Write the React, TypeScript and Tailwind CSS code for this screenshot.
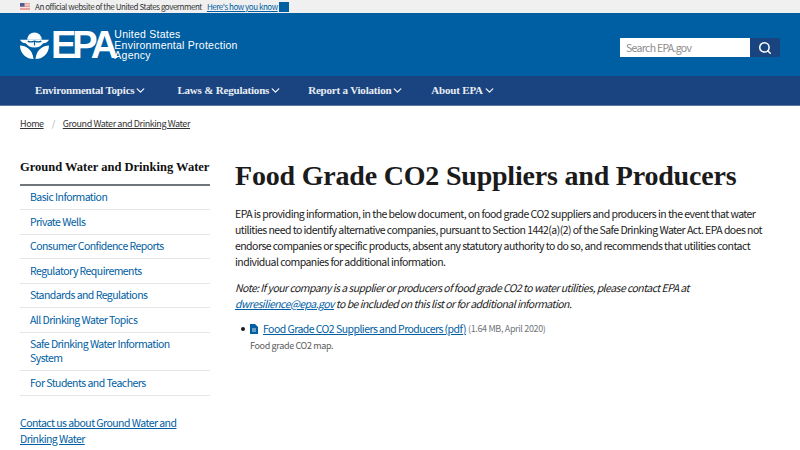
import { ChevronDown, Search } from "lucide-react";

const sans = "font-['Noto_Sans_CJK_SC','Noto_Sans',sans-serif]";
const serif = "font-['Liberation_Serif','DejaVu_Serif',serif]";

const side = [
  "Basic Information",
  "Private Wells",
  "Consumer Confidence Reports",
  "Regulatory Requirements",
  "Standards and Regulations",
  "All Drinking Water Topics",
  "Safe Drinking Water Information System",
  "For Students and Teachers",
];
const nav = [
  { t: "Environmental Topics", w: "mr-[30px]" },
  { t: "Laws & Regulations", w: "mr-[26px]" },
  { t: "Report a Violation", w: "mr-[27px]" },
  { t: "About EPA", w: "" },
];

function Emblem() {
  return (
    <svg width="29" height="29" viewBox="0 0 30 30" className="shrink-0">
      <path d="M7.5 10 A7.5 7.5 0 0 1 22.5 10Z" fill="#fff" />
      <path d="M0 10 H30 C29 12 27 13.4 24 13.6 C22 16.5 19 18 15 18 C11 18 8 16.5 6 13.6 C3 13.4 1 12 0 10Z" fill="#fff" />
      <path d="M8 11.5 C10.5 13 12.5 12.5 15 11.5 C17.5 12.5 19.5 13 22 11.5" fill="none" stroke="#005ea2" strokeWidth="1.3" />
      <path d="M15 16 V12" stroke="#005ea2" strokeWidth="1.2" />
      <path d="M0 16 C6 16 13 20 14 30 C7 30 0 25 0 16Z" fill="#fff" />
      <path d="M30 16 C24 16 17 20 16 30 C23 30 30 25 30 16Z" fill="#fff" />
    </svg>
  );
}

export default function App() {
  return (
    <div className={`h-[450px] w-[800px] overflow-hidden bg-white ${sans} text-[#1b1b1b]`}>
      <div className="flex h-[13px] items-center bg-[#f0f0f0] pl-[20px] text-[8px] leading-none tracking-[-0.45px]">
        <svg width="10" height="7" viewBox="0 0 10 7" className="mr-[5px]">
          <rect width="10" height="7" fill="#e8a49c" />
          <rect y="1.4" width="10" height="1" fill="#f6e4e0" />
          <rect y="4" width="10" height="1" fill="#f6e4e0" />
          <rect width="4.5" height="3.6" fill="#4a5f96" />
        </svg>
        <span className="text-[#333]">An official website of the United States government</span>
        <span className="ml-[5px] text-[#005ea2] underline">Here's how you know</span>
        <span className="ml-[1px] h-[10px] w-[10px] bg-[#005ea2]" />
      </div>

      <header className="flex h-[63px] items-center justify-between bg-[#005ea2] pl-[20px] pr-[20px]">
        <div className="flex items-center text-white">
          <Emblem />
          <span className="ml-[2px] font-['Liberation_Sans_Narrow','Liberation_Sans',sans-serif] text-[38px] font-bold leading-none tracking-[-4px]">EPA</span>
          <div className="pt-[1px] font-['Liberation_Sans',sans-serif] text-[10.5px] leading-[10.5px] tracking-[0.25px]">
            <div>United States</div>
            <div>Environmental Protection</div>
            <div>Agency</div>
          </div>
        </div>
        <div className="mt-[6px] flex h-[19px]">
          <div className="flex w-[130px] items-center bg-white pl-[6px] text-[10.5px] tracking-[-0.7px] text-[#8b8b8b]">Search EPA.gov</div>
          <div className="flex w-[30px] items-center justify-center rounded-r-[2px] bg-[#1a4480]">
            <Search size={14} color="#fff" strokeWidth={2.6} />
          </div>
        </div>
      </header>

      <nav className={`flex h-[30px] items-center border-b border-[#5b7aa8] bg-[#1a4480] pl-[35px] ${serif} text-[11px] font-bold tracking-[-0.2px] text-[#e8edf4]`}>
        {nav.map((n) => (
          <div key={n.t} className={`flex items-center ${n.w}`}>
            <span>{n.t}</span>
            <ChevronDown size={13} strokeWidth={2.6} />
          </div>
        ))}
      </nav>

      <div className="flex items-center pl-[20px] pt-[12px] text-[9px] leading-[12px] tracking-[-0.42px] text-[#333]">
        <span className="underline">Home</span>
        <span className="mx-[8px] text-[#aaa]">/</span>
        <span className="underline">Ground Water and Drinking Water</span>
      </div>

      <div className="flex pl-[20px] pt-[29px]">
        <aside className="w-[190px] shrink-0">
          <h2 className={`${serif} whitespace-nowrap border-b-2 border-[#71767a] pb-[9px] text-[12.5px] font-bold leading-[16px] text-[#111]`}>
            Ground Water and Drinking Water
          </h2>
          <ul className="-mt-[0.5px] text-[10.5px] leading-[14px] tracking-[-0.55px] text-[#005ea2]">
            {side.map((s) => (
              <li key={s} className="border-b border-[#e6e6e6] py-[4.75px] pl-[10px] pr-[40px]">
                {s}
              </li>
            ))}
          </ul>
          <div className="mt-[19px] text-[10.5px] leading-[16px] tracking-[-0.55px] text-[#005ea2] underline">
            Contact us about Ground Water and Drinking Water
          </div>
        </aside>

        <main className="ml-[25px] w-[535px]">
          <h1 className={`${serif} mt-[-1px] whitespace-nowrap text-[28px] font-bold leading-[36px] tracking-[-0.2px] text-[#1b1b1b]`}>
            Food Grade CO2 Suppliers and Producers
          </h1>
          <p className="mt-[12px] text-[10.5px] leading-[16px] tracking-[-0.55px] text-[#1b1b1b]">
            EPA is providing information, in the below document, on food grade CO2 suppliers and producers in the event that water utilities need to identify alternative companies, pursuant to Section 1442(a)(2) of the Safe Drinking Water Act. EPA does not endorse companies or specific products, absent any statutory authority to do so, and recommends that utilities contact individual companies for additional information.
          </p>
          <p className="mt-[10px] text-[10.5px] italic leading-[16px] tracking-[-0.55px]">
            Note: If your company is a supplier or producers of food grade CO2 to water utilities, please contact EPA at <span className="text-[#005ea2] underline">dwresilience@epa.gov</span> to be included on this list or for additional information.
          </p>
          <div className="mt-[9px] flex items-start pl-[6px]">
            <span className="mr-[5px] mt-[6px] h-[4px] w-[4px] rounded-full bg-[#1b1b1b]" />
            <div>
              <div className="flex items-center text-[10.5px] leading-[16px] tracking-[-0.55px]">
                <svg width="8" height="10" viewBox="0 0 8 10" className="mr-[5px]">
                  <path d="M0 0H5L8 3V10H0Z" fill="#005ea2" />
                  <path d="M2 5H6M2 7H6" stroke="#fff" strokeWidth="0.8" />
                </svg>
                <span className="text-[#005ea2] underline">Food Grade CO2 Suppliers and Producers (pdf)</span>
                <span className="ml-[2px] text-[9px] tracking-[-0.35px] text-[#71767a]">(1.64 MB, April 2020)</span>
              </div>
              <div className="mt-[2px] text-[9px] leading-[14px] tracking-[-0.35px] text-[#5c5c5c]">Food grade CO2 map.</div>
            </div>
          </div>
        </main>
      </div>
    </div>
  );
}
